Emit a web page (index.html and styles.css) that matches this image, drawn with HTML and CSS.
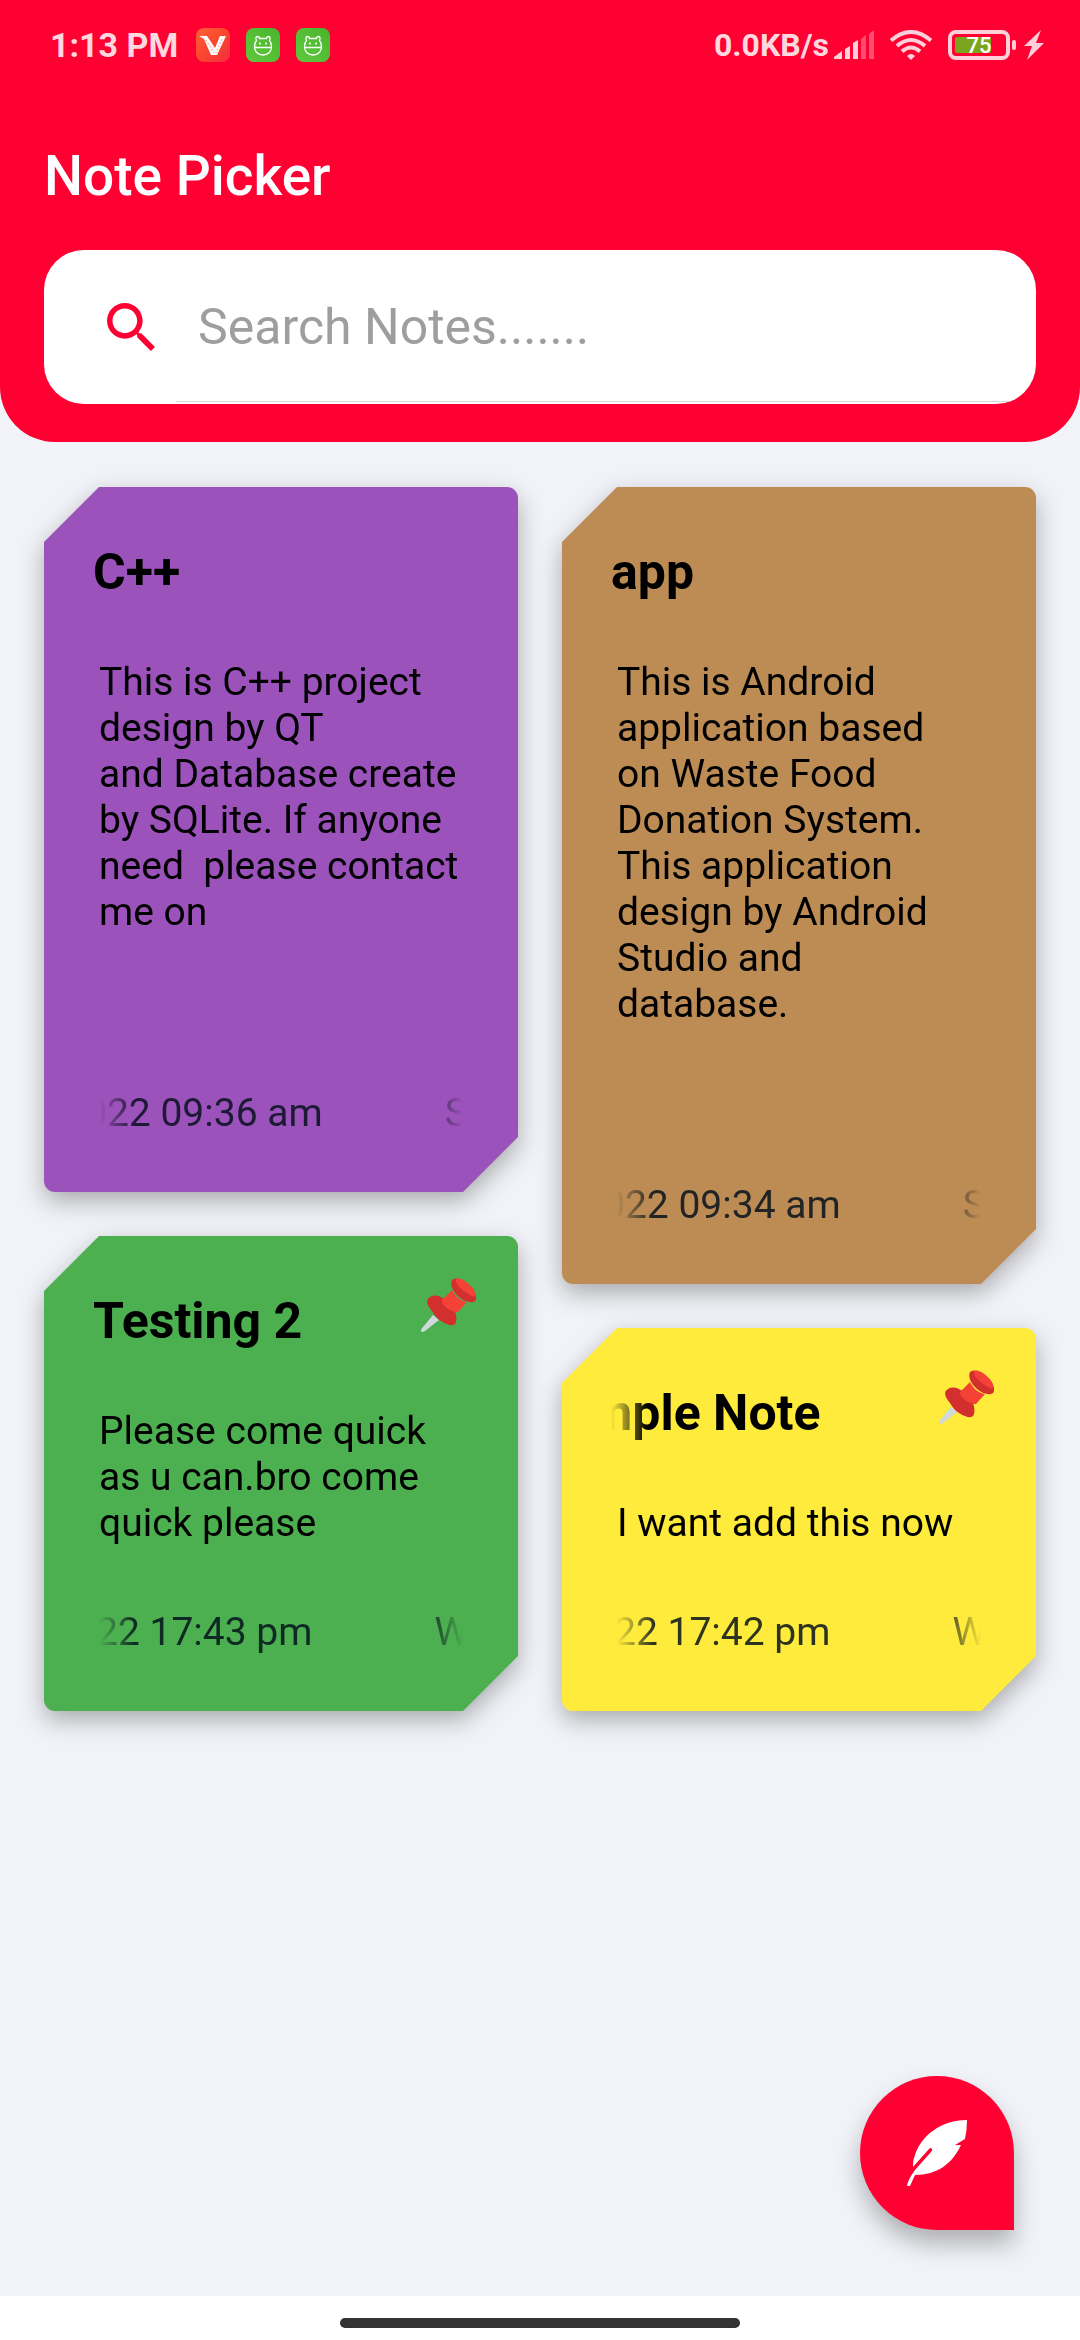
FILE: index.html
```html
<!DOCTYPE html>
<html lang="en">
<head>
<meta charset="utf-8">
<meta name="viewport" content="width=device-width, initial-scale=1">
<title>Note Picker</title>
<link rel="stylesheet" href="styles.css">
</head>
<body>
<svg width="0" height="0" class="defs" aria-hidden="true">
  <defs>
    <linearGradient id="green" x1="0" y1="1" x2="1" y2="0"><stop offset="0" stop-color="#5fc83f"/><stop offset="1" stop-color="#4ab52c"/></linearGradient>
    <linearGradient id="orange" x1="0" y1="0" x2="1" y2="1"><stop offset="0" stop-color="#ff6136"/><stop offset="0.5" stop-color="#f9472f"/><stop offset="1" stop-color="#f52c40"/></linearGradient>
    <symbol id="bot" viewBox="0 0 34 34">
      <rect width="34" height="34" rx="8" fill="url(#green)"/>
      <path d="M8.500 19C8.500 16 9.500 13.500 10.500 12.500C9.500 10.500 10 8.500 11 8.500C12 8.500 13.500 9 13.500 10.500H20.500C20.500 9 22 8.500 23 8.500C24 8.500 24.500 10.500 23.500 12.500C24.500 13.500 25.500 16 25.500 19C25.500 23.500 22 27 17 27C12 27 8.500 23.500 8.500 19ZM8.500 19.500H25.500" fill="none" stroke="#fff" stroke-width="1.300"/>
      <path d="M14 14.500V16.500M20 14.500V16.500" stroke="#fff" stroke-width="1.600"/>
    </symbol>
    <symbol id="pin" viewBox="0 0 56 56">
      <path d="M12 38L18 43L4 54Q1 56 0 54Q0 52 2 50Z" fill="#cfd8dc"/>
      <path d="M9 20C14 17 20 19 26 24C33 30 37 38 35 45C34 49 30 49 26 47C20 45 15 41 11 34C6 28 4 23 9 20Z" fill="#d32f2f"/>
      <path d="M31 3Q34 0 40 3C50 8 56 15 55 22C54 27 45 26 38 20C31 14 29 7 31 3Z" fill="#d32f2f"/>
      <path d="M31 13C34 19 39 24 46 25L37 35C31 36 20 28 21 23Z" fill="#f44336"/>
      <path d="M35 2C41 -1 56 12 54 19C52 22 33 9 35 2Z" fill="#f44336"/>
    </symbol>
  </defs>
</svg>

<header class="top">
  <div class="status">
    <div class="status-group">
      <span class="clock">1:13 PM</span>
      <svg class="app-icon" viewBox="0 0 34 34"><rect width="34" height="34" rx="8" fill="url(#orange)"/><path d="M3 8H11L19 20L24 8H30L21 27H15L8 11Z" fill="#fff"/><path d="M10 12L18 25M26 11L20 25" stroke="#f7bdb5" stroke-width="1.500" stroke-dasharray="2 1.500"/></svg>
      <svg class="app-icon"><use href="#bot"/></svg>
      <svg class="app-icon"><use href="#bot"/></svg>
    </div>
    <div class="status-group status-right">
      <span class="speed">0.0KB/s</span>
      <svg class="signal" viewBox="0 0 40 30" fill="#fff"><g opacity=".82"><path d="M0 29V27L8 21V29Z"/><path d="M11 19L16 16V29H11Z"/><path d="M19 13L24 10V29H19Z"/></g><g opacity=".3"><path d="M27 9L32 5V29H27Z"/><path d="M35 4L40 0V29H35Z"/></g></svg>
      <svg class="wifi" viewBox="0 0 42 30" fill="none" stroke="#ffd0da" stroke-width="4"><path d="M1 10.500Q21 -6.500 41 10.500"/><path d="M7 16Q21 4 35 16"/><path d="M12 21.500Q21 13.500 30 21.500"/><path d="M17 26L21 30L25 26Q21 22 17 26Z" fill="#ffd0da" stroke="none"/></svg>
      <svg class="battery" viewBox="0 0 68 30"><rect x="2" y="2" width="58" height="26" rx="6" fill="none" stroke="#ffd0da" stroke-width="4"/><rect x="7" y="7" width="36" height="16" rx="2" fill="#7aa51c"/><rect x="64" y="10" width="4" height="10" rx="2" fill="#ffd0da"/><text x="31" y="23" text-anchor="middle" class="battery-level">75</text></svg>
      <svg class="bolt" viewBox="0 0 20 30"><path d="M17 0L0 16H8L3 30L20 13H12Z" fill="#ffd0da"/></svg>
    </div>
  </div>
  <h1 class="app-title">Note Picker</h1>
  <form class="search" role="search">
    <label class="search-label" for="search" aria-label="Search">
      <svg class="search-icon" viewBox="3 3 17.500 17.500"><path fill="#ff0033" d="M15.500 14h-.79l-.28-.27C15.410 12.590 16 11.110 16 9.500 16 5.910 13.090 3 9.500 3S3 5.910 3 9.500 5.910 16 9.500 16c1.610 0 3.090-.59 4.230-1.570l.27.28v.79l5 4.990L20.490 19l-4.990-5zm-6 0C7.010 14 5 11.990 5 9.500S7.010 5 9.500 5 14 7.010 14 9.500 11.990 14 9.500 14z"/></svg>
    </label>
    <input class="search-input" id="search" type="search" placeholder="Search Notes.......">
  </form>
</header>

<main class="notes">
  <div class="column">
    <article class="note">
      <div class="sheet purple">
        <div class="note-head"><h2 class="note-title">C++</h2></div>
        <p class="note-text">This is C++ project
design by QT
and Database create
by SQLite. If anyone
need  please contact
me on

&nbsp;</p>
        <div class="note-date"><span style="margin-left:-14px">022 09:36 am</span><span>S</span></div>
      </div>
    </article>
    <article class="note">
      <div class="sheet green">
        <div class="note-head"><h2 class="note-title">Testing 2</h2><svg class="pin"><use href="#pin"/></svg></div>
        <p class="note-text">Please come quick
as u can.bro come
quick please</p>
        <div class="note-date"><span style="margin-left:-3px">22 17:43 pm</span><span>W</span></div>
      </div>
    </article>
  </div>
  <div class="column">
    <article class="note">
      <div class="sheet brown">
        <div class="note-head"><h2 class="note-title">app</h2></div>
        <p class="note-text">This is Android
application based
on Waste Food
Donation System.
This application
design by Android
Studio and
database.

&nbsp;</p>
        <div class="note-date"><span style="margin-left:-14px">022 09:34 am</span><span>S</span></div>
      </div>
    </article>
    <article class="note">
      <div class="sheet yellow">
        <div class="note-head"><h2 class="note-title scrolling"><span style="margin-left:-22px">mple Note</span></h2><svg class="pin"><use href="#pin"/></svg></div>
        <p class="note-text">I want add this now</p>
        <div class="note-date"><span style="margin-left:-3px">22 17:42 pm</span><span>W</span></div>
      </div>
    </article>
  </div>
</main>

<button class="add" type="button" aria-label="New note">
  <svg class="feather" viewBox="0 0 60 66"><path d="M60 0C34 0 14 16 8 35C6 40 6 44 6 47L22 29Q24 27 25 29Q26 30 24 32L8 50Q2 58 0 65Q0 66 1 66H3L8 55C30 55 45 44 54 25H48L58 19Q60 10 60 0Z" fill="#fff"/></svg>
</button>

<footer class="nav"><span class="handle"></span></footer>
</body>
</html>
```
FILE: styles.css
```css
* { box-sizing: border-box; }

body {
  margin: 0;
  min-height: 100vh;
  display: flex;
  flex-direction: column;
  background: #f2f3f8;
  color: #000;
  font-family: Roboto, "Noto Sans", sans-serif;
}

.defs { position: absolute; }

h1, h2, p { margin: 0; }

/* Header */
.top {
  padding: 25px 44px 38px;
  background: #ff0033;
  border-radius: 0 0 55px 55px;
}

.status {
  display: flex;
  justify-content: space-between;
  align-items: center;
  height: 40px;
  margin-right: -8px;
  padding-left: 6px;
}

.status-group { display: flex; align-items: center; gap: 16px; }

.clock, .speed {
  color: rgba(255, 255, 255, 0.86);
  font-size: 34px;
  font-weight: 700;
  line-height: 40px;
}
.clock { margin-right: 2px; }
.speed { font-size: 32px; margin-right: -11px; }

.app-icon { width: 34px; height: 34px; }
.signal { width: 40px; height: 30px; }
.wifi { width: 42px; height: 30px; }
.battery { width: 68px; height: 30px; }
.bolt { width: 20px; height: 30px; margin-left: -8px; }
.battery-level { fill: #fff; font-size: 22px; font-weight: 500; }

.app-title {
  margin-top: 79px;
  color: #fff;
  font-size: 55px;
  font-weight: 500;
  line-height: 64px;
}

.search {
  display: flex;
  height: 154px;
  margin-top: 42px;
  background: #fff;
  border-radius: 40px;
  overflow: hidden;
}

.search-label {
  display: flex;
  align-items: center;
  padding: 0 21px 0 63px;
}
.search-icon { width: 48px; height: 48px; }

.search-input {
  flex: 1;
  min-width: 0;
  height: 152px;
  margin: 0 23px 0 0;
  padding: 2px 22px 0;
  border: 0;
  border-bottom: 1px solid #d4d9d4;
  background: none;
  color: #000;
  font: 400 50px Roboto, sans-serif;
  outline: none;
}
.search-input::placeholder { color: #9e9e9e; opacity: 1; }

/* Notes */
.notes {
  flex: 1;
  display: grid;
  grid-template-columns: 1fr 1fr;
  gap: 44px;
  padding: 45px 44px;
}

.column {
  display: flex;
  flex-direction: column;
  gap: 44px;
  min-width: 0;
}

.note { filter: drop-shadow(0 9px 12px rgba(0, 0, 0, 0.3)); }

.sheet {
  padding: 41px 41px 56px;
  border-radius: 0 11px 0 11px;
  clip-path: polygon(55px 0, 100% 0, 100% calc(100% - 55px), calc(100% - 55px) 100%, 0 100%, 0 55px);
}
.purple { background: #9c52bb; }
.green { background: #4db050; }
.brown { background: #bc8c54; }
.yellow { background: #ffeb3b; }

.note-head {
  display: flex;
  align-items: flex-start;
  justify-content: space-between;
}

.note-title {
  flex: 1;
  min-width: 0;
  margin: 15px 0 0 8px;
  overflow: hidden;
  white-space: nowrap;
  font-size: 50px;
  font-weight: 700;
  line-height: 58px;
}

.pin { width: 56px; height: 56px; }

.note-text {
  margin: 58px 0 0 14px;
  font-size: 39px;
  line-height: 46px;
  white-space: pre-wrap;
}

.note-date {
  display: flex;
  gap: 122px;
  margin: 63px 14px 0;
  overflow: hidden;
  color: rgba(4, 16, 28, 0.84);
  font-size: 39px;
  line-height: 46px;
  white-space: nowrap;
  -webkit-mask-image: linear-gradient(90deg, transparent, #000 36px, #000 calc(100% - 36px), transparent);
  mask-image: linear-gradient(90deg, transparent, #000 36px, #000 calc(100% - 36px), transparent);
}

.scrolling {
  -webkit-mask-image: linear-gradient(90deg, transparent, #000 36px);
  mask-image: linear-gradient(90deg, transparent, #000 36px);
}

/* Floating action button */
.add {
  position: fixed;
  right: 66px;
  bottom: 110px;
  display: grid;
  place-items: center;
  width: 154px;
  height: 154px;
  padding: 0;
  border: 0;
  border-radius: 50% 50% 0 50%;
  background: #ff0033;
  box-shadow: 0 14px 24px rgba(0, 0, 0, 0.28);
}
.feather { width: 60px; height: 66px; }

/* System navigation */
.nav {
  display: flex;
  justify-content: center;
  align-items: center;
  height: 44px;
  padding-top: 10px;
  background: #fff;
}
.handle {
  width: 37%;
  height: 10px;
  border-radius: 5px;
  background: #333;
}
```
